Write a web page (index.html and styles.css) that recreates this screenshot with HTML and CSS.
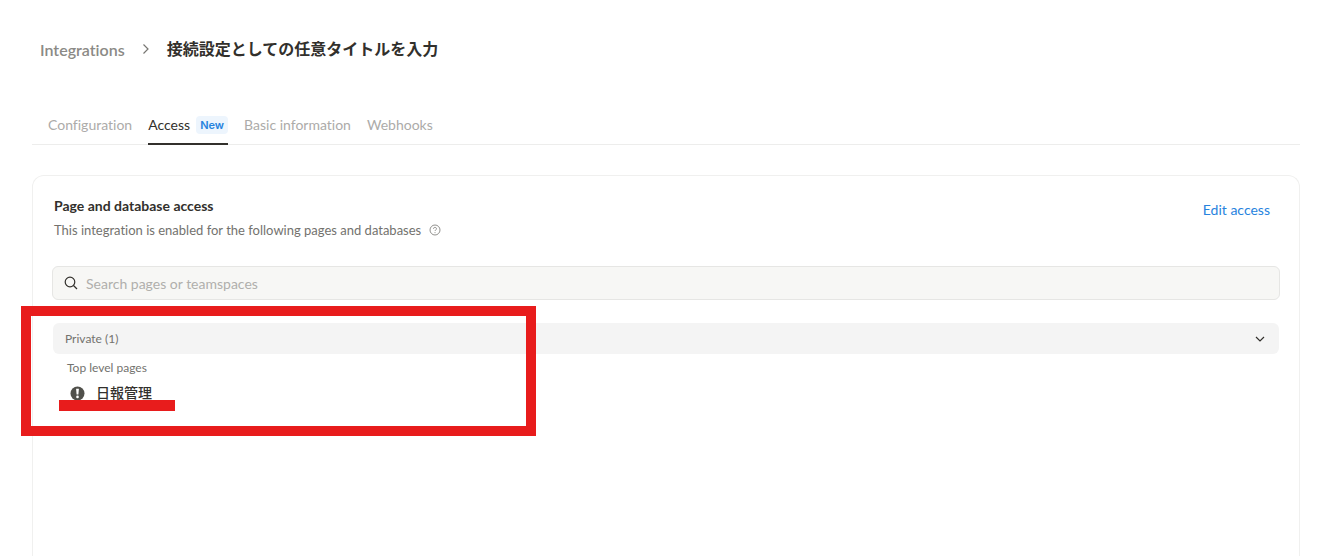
FILE: index.html
```html
<!DOCTYPE html>
<html lang="ja">
<head>
  <meta charset="UTF-8">
  <meta name="viewport" content="width=device-width, initial-scale=1.0">
  <title>Integrations</title>
  <link rel="stylesheet" href="styles.css">
</head>
<body>
  <nav class="breadcrumb">
    <a href="#" class="breadcrumb-link">Integrations</a>
    <svg class="breadcrumb-arrow" width="8" height="12" viewBox="0 0 8 12"><path d="M1.500 1.500 6 6l-4.500 4.500"/></svg>
    <h1 class="breadcrumb-title">接続設定としての任意タイトルを入力</h1>
  </nav>

  <nav class="tabs">
    <a href="#" class="tab">Configuration</a>
    <a href="#" class="tab tab-active">Access <span class="badge">New</span></a>
    <a href="#" class="tab">Basic information</a>
    <a href="#" class="tab">Webhooks</a>
  </nav>

  <main class="card">
    <header class="card-header">
      <div>
        <h2 class="card-title">Page and database access</h2>
        <p class="card-desc">
          This integration is enabled for the following pages and databases
          <svg class="help-icon" width="12" height="12" viewBox="0 0 12 12">
            <circle cx="6" cy="6" r="5"/>
            <path d="M4.500 4.800a1.500 1.400 0 1 1 2.200 1.200C6.200 6.300 6 6.500 6 7M6 8.200v.9"/>
          </svg>
        </p>
      </div>
      <button type="button" class="edit-button">Edit access</button>
    </header>

    <label class="search">
      <svg class="search-icon" width="14" height="14" viewBox="0 0 14 14">
        <circle cx="6" cy="6" r="4.800"/>
        <path d="m9.500 9.500 3.500 3.500"/>
      </svg>
      <input type="search" class="search-input" placeholder="Search pages or teamspaces" aria-label="Search pages or teamspaces">
    </label>

    <section class="group">
      <button type="button" class="group-toggle" aria-expanded="true">
        Private (1)
        <svg class="group-arrow" width="10" height="6" viewBox="0 0 10 6"><path d="m1 1 4 4 4-4"/></svg>
      </button>
      <h3 class="group-label">Top level pages</h3>
      <a href="#" class="page-row">
        <svg width="15" height="15" viewBox="0 0 15 15">
          <circle cx="7.500" cy="7.500" r="7" fill="#50504b"/>
          <path d="M6.100 2.800h2.800l-.5 5.800H6.600z" fill="#fff"/>
          <circle cx="7.500" cy="10.900" r="1.300" fill="#fff"/>
        </svg>
        <span>日報管理</span>
      </a>
      <div class="mark-underline"></div>
      <div class="mark-box"></div>
    </section>
  </main>
</body>
</html>
```

FILE: styles.css
```css
* {
  box-sizing: border-box;
}
body {
  display: flex;
  flex-direction: column;
  min-height: 100vh;
  margin: 0;
  padding: 36px 27px 0 32px;
  background: #fff;
  color: #32302c;
  font-family: Lato, 'Noto Sans CJK JP', sans-serif;
  font-size: 14px;
  font-variant-ligatures: none;
}
h1, h2, h3, p {
  margin: 0;
}
a {
  color: inherit;
  text-decoration: none;
}
button, input {
  padding: 0;
  border: none;
  background: none;
  color: inherit;
  font: inherit;
}
button {
  cursor: pointer;
}
svg {
  flex: none;
}

/* Breadcrumb */
.breadcrumb {
  display: flex;
  align-items: center;
  gap: 17px;
  height: 26px;
  padding-left: 8px;
  font-size: 16px;
}
.breadcrumb-link {
  color: #8b8a86;
  font-weight: 600;
}
.breadcrumb-arrow {
  fill: none;
  stroke: #777672;
  stroke-width: 1.2;
}
.breadcrumb-title {
  font-size: 16px;
  font-weight: 700;
  line-height: 24px;
}

/* Tabs */
.tabs {
  display: flex;
  gap: 16px;
  height: 39px;
  margin-top: 44px;
  padding-left: 16px;
  border-bottom: 1px solid #ededec;
}
.tab {
  display: flex;
  align-items: center;
  gap: 6px;
  height: 39px;
  border-bottom: 2px solid transparent;
  color: #acaba9;
}
.tab-active {
  border-bottom-color: #32302c;
  color: #32302c;
}
.badge {
  padding: 0 4px;
  border-radius: 4px;
  background: #edf5fd;
  color: #2783de;
  font-family: Inter, sans-serif;
  font-size: 11px;
  font-weight: 600;
  line-height: 18px;
}

/* Access card */
.card {
  flex: 1;
  margin-top: 30px;
  padding: 20px 19px;
  border: 1px solid #f0f0ef;
  border-bottom: none;
  border-radius: 12px 12px 0 0;
}
.card-header {
  display: flex;
  justify-content: space-between;
  align-items: flex-start;
  padding: 0 10px 0 2px;
}
.card-title {
  font-size: 14px;
  font-weight: 700;
  line-height: 20px;
}
.card-desc {
  display: flex;
  align-items: center;
  gap: 8px;
  margin-top: 4px;
  color: #73726e;
  font-size: 13px;
  line-height: 20px;
}
.help-icon {
  fill: none;
  stroke: #91908d;
}
.edit-button {
  margin-top: 4px;
  color: #2783de;
  line-height: 20px;
}
.search {
  display: flex;
  align-items: center;
  gap: 8px;
  height: 34px;
  margin-top: 26px;
  padding: 0 11px;
  border: 1px solid #e6e6e4;
  border-radius: 6px;
  background: #f7f7f5;
}
.search-icon {
  fill: none;
  stroke: #32302c;
  stroke-width: 1.2;
}
.search-input {
  flex: 1;
  height: 20px;
  outline: none;
}
.search-input::placeholder {
  color: #b0afac;
}

/* Page list */
.group {
  position: relative;
  margin: 23px 1px 0;
}
.group-toggle {
  display: flex;
  justify-content: space-between;
  align-items: center;
  width: 100%;
  height: 31px;
  padding: 0 14px 0 12px;
  border-radius: 6px;
  background: #f4f4f4;
  color: #73726e;
  font-size: 12px;
}
.group-arrow {
  fill: none;
  stroke: #32302c;
  stroke-width: 1.2;
}
.group-label {
  padding: 4px 14px 0;
  color: #73726e;
  font-size: 12px;
  font-weight: 400;
  line-height: 20px;
}
.page-row {
  display: flex;
  align-items: center;
  gap: 11px;
  padding: 4px 17px;
  font-weight: 500;
  line-height: 22px;
}

/* Red marks drawn over the list */
.mark-underline {
  position: absolute;
  top: 77px;
  left: 6px;
  width: 116px;
  height: 11px;
  background: #e81c1c;
}
.mark-box {
  position: absolute;
  top: -17px;
  left: -32px;
  width: 515px;
  height: 130px;
  border: 10px solid #e81c1c;
  pointer-events: none;
}
```
